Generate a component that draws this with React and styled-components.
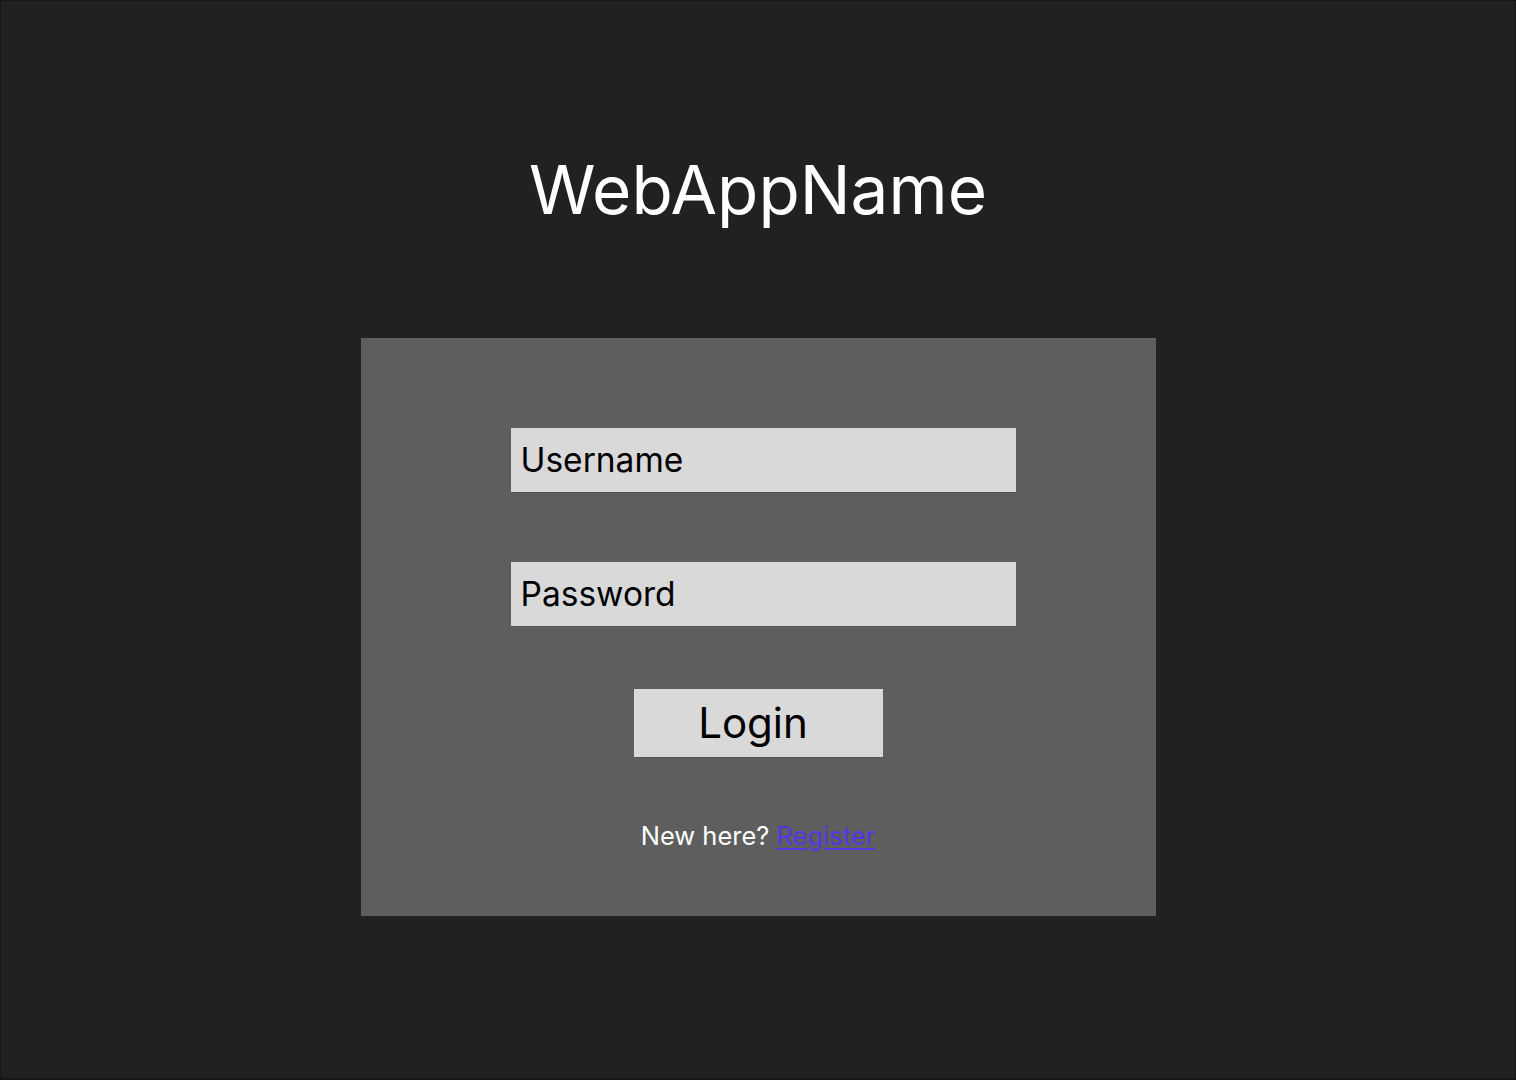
import styled, { createGlobalStyle } from 'styled-components';

const GlobalStyle = createGlobalStyle`
  html, body {
    margin: 0;
    padding: 0;
    background: #212121;
  }
  * {
    box-sizing: border-box;
  }
`;

const Page = styled.div`
  width: 100%;
  height: 100vh;
  display: flex;
  flex-direction: column;
  align-items: center;
  background: #212121;
  border: 1px solid #161616;
  border-bottom-width: 2px;
  font-family: Inter, 'Noto Sans', sans-serif;
`;

const Title = styled.h1`
  margin: 155px 0 0;
  font-size: 67.5px;
  font-weight: 400;
  line-height: 1;
  color: #ffffff;
`;

const Panel = styled.form`
  margin-top: 114px;
  width: 795px;
  height: 578px;
  background: #5e5e5e;
  display: flex;
  flex-direction: column;
  align-items: center;
  padding-top: 90px;
`;

const Field = styled.input`
  width: 505px;
  height: 64.5px;
  margin: 0 0 ${props => props.$gap}px 10px;
  padding: 0 10px;
  border: none;
  outline: none;
  background: #d9d9d9;
  box-shadow: 0 1px 0 rgba(0, 0, 0, 0.12);
  font-family: Inter, 'Noto Sans', sans-serif;
  font-size: 33.5px;
  color: #000;

  &::placeholder {
    color: #000;
    opacity: 1;
  }
`;

const LoginButton = styled.button`
  width: 249px;
  height: 68.5px;
  border: none;
  background: #d9d9d9;
  box-shadow: 0 1px 0 rgba(0, 0, 0, 0.12);
  font-family: Inter, 'Noto Sans', sans-serif;
  font-size: 42px;
  color: #000;
  padding: 0 10px 0 0;
  cursor: pointer;
`;

const Footer = styled.p`
  margin: 64px 0 0;
  font-size: 25.5px;
  line-height: 1.2;
  color: #ffffff;
`;

const RegisterLink = styled.a`
  color: #5138e4;
  text-decoration: underline;
  text-underline-offset: 3px;
`;

export default function App() {
  return (
    <>
      <GlobalStyle />
      <Page>
        <Title>WebAppName</Title>
        <Panel onSubmit={e => e.preventDefault()}>
          <Field type="text" placeholder="Username" $gap={69.5} />
          <Field type="password" placeholder="Password" $gap={62.5} />
          <LoginButton type="submit">Login</LoginButton>
          <Footer>
            New here? <RegisterLink href="#">Register</RegisterLink>
          </Footer>
        </Panel>
      </Page>
    </>
  );
}
